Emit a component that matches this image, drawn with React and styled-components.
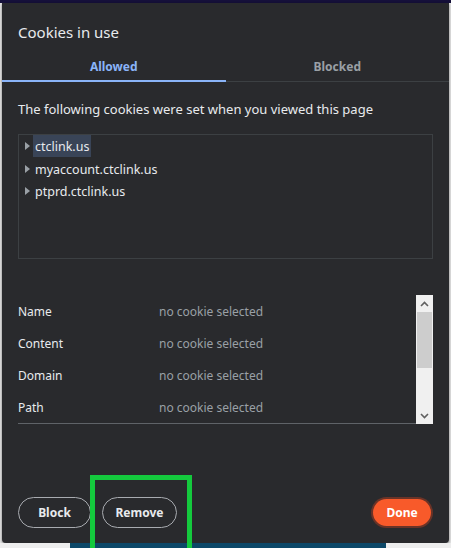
import React from 'react';
import styled, { createGlobalStyle } from 'styled-components';

const GlobalStyle = createGlobalStyle`
  html, body {
    margin: 0;
    padding: 0;
    background: #ececec;
  }
  body {
    font-family: "Noto Sans", "Open Sans", sans-serif;
  }
`;

const Page = styled.div`
  position: relative;
  width: 451px;
  height: 548px;
  overflow: hidden;
  display: flex;
  flex-direction: column;
  background: #e6e6e6;
`;

const TopStrip = styled.div`
  height: 3px;
  background: #15103a;
`;

const Middle = styled.div`
  display: flex;
  padding: 0 2px;
`;

const BottomStrip = styled.div`
  flex: 1;
  display: flex;
  background: #ededed;
  padding-left: 70px;
  span {
    width: 316px;
    background: #0d4868;
  }
`;

const Dialog = styled.div`
  width: 447px;
  height: 540px;
  background: #292a2d;
  border-radius: 0 0 4px 4px;
  box-shadow: 0 1px 3px rgba(0, 0, 0, 0.5);
  display: flex;
  flex-direction: column;
  color: #e8eaed;
`;

const Title = styled.h1`
  margin: 0;
  padding: 19px 16px 8px;
  font-size: 15px;
  line-height: 20px;
  font-weight: 400;
`;

const TabBar = styled.div`
  display: grid;
  grid-template-columns: 1fr 1fr;
  border-bottom: 1px solid #3c4043;
`;

const Tab = styled.div`
  height: 32px;
  margin-bottom: -1px;
  display: flex;
  align-items: center;
  justify-content: center;
  font-size: 12px;
  font-weight: 700;
  color: ${p => (p.$active ? '#8ab4f8' : '#9aa0a6')};
  box-shadow: ${p => (p.$active ? 'inset 0 -2px 0 #8ab4f8' : 'none')};
`;

const Body = styled.div`
  flex: 1;
  display: flex;
  flex-direction: column;
  padding: 18px 16px 15px;
`;

const Description = styled.p`
  margin: 0;
  font-size: 13px;
  line-height: 18px;
`;

const TreeBox = styled.div`
  margin-top: 16px;
  height: 123px;
  border: 1px solid #3c4043;
`;

const TreeRow = styled.div`
  height: 22.5px;
  display: flex;
  align-items: center;
  padding-left: 6px;
  gap: 3px;
  font-size: 12.5px;
`;

const Arrow = styled.span`
  width: 0;
  height: 0;
  border-top: 4px solid transparent;
  border-bottom: 4px solid transparent;
  border-left: 5px solid #9aa0a6;
`;

const TreeLabel = styled.span`
  height: 22px;
  line-height: 23px;
  padding: 0 2px;
  background: ${p => (p.$selected ? '#394457' : 'transparent')};
`;

const Details = styled.div`
  margin-top: 36px;
  display: flex;
`;

const DetailRows = styled.div`
  flex: 1;
  border-bottom: 1px solid #5f6368;
`;

const DetailRow = styled.div`
  height: 32px;
  display: grid;
  grid-template-columns: 141px 1fr;
  align-items: center;
  font-size: 12px;
`;

const Value = styled.span`
  color: #9aa0a6;
`;

const Scrollbar = styled.div`
  width: 17px;
  height: 129px;
  background: #f0f0f0;
  display: flex;
  flex-direction: column;
  align-items: center;
`;

const ScrollArrow = styled.div`
  height: 17px;
  width: 17px;
  display: flex;
  align-items: center;
  justify-content: center;
  margin-top: ${p => (p.$bottom ? 'auto' : '0')};
`;

const Thumb = styled.div`
  width: 15px;
  height: 56px;
  background: #cdcdcd;
`;

const Footer = styled.div`
  margin-top: auto;
  display: flex;
  align-items: center;
  gap: 11px;
`;

const Button = styled.button`
  width: ${p => p.$w}px;
  height: 31px;
  padding: 0;
  border-radius: 16px;
  border: 1px solid #a8abb0;
  background: transparent;
  color: #e8eaed;
  font-family: inherit;
  font-size: 12px;
  font-weight: 700;
`;

const DoneButton = styled.button`
  margin-left: auto;
  width: 58px;
  height: 27px;
  margin-right: 2px;
  padding: 0;
  border-radius: 14px;
  border: none;
  background: #f85a2a;
  color: #ffffff;
  font-family: inherit;
  font-size: 12px;
  font-weight: 700;
  box-shadow: 0 0 0 2px #6a3327;
`;

const Highlight = styled.div`
  position: absolute;
  left: 90px;
  top: 475px;
  width: 92px;
  height: 80px;
  border: 5px solid #14c93d;
`;

const Chevron = ({ up }) => (
  <svg width="9" height="6" viewBox="0 0 9 6">
    <path
      d={up ? 'M1 5 L4.5 1.5 L8 5' : 'M1 1 L4.5 4.5 L8 1'}
      fill="none"
      stroke="#606060"
      strokeWidth="1.6"
    />
  </svg>
);

const domains = ['ctclink.us', 'myaccount.ctclink.us', 'ptprd.ctclink.us'];
const fields = ['Name', 'Content', 'Domain', 'Path'];

export default function App() {
  return (
    <Page>
      <GlobalStyle />
      <TopStrip />
      <Middle>
        <Dialog>
          <Title>Cookies in use</Title>
          <TabBar>
            <Tab $active>Allowed</Tab>
            <Tab>Blocked</Tab>
          </TabBar>
          <Body>
            <Description>The following cookies were set when you viewed this page</Description>
            <TreeBox>
              {domains.map((d, i) => (
                <TreeRow key={d}>
                  <Arrow />
                  <TreeLabel $selected={i === 0}>{d}</TreeLabel>
                </TreeRow>
              ))}
            </TreeBox>
            <Details>
              <DetailRows>
                {fields.map(f => (
                  <DetailRow key={f}>
                    <span>{f}</span>
                    <Value>no cookie selected</Value>
                  </DetailRow>
                ))}
              </DetailRows>
              <Scrollbar>
                <ScrollArrow><Chevron up /></ScrollArrow>
                <Thumb />
                <ScrollArrow $bottom><Chevron /></ScrollArrow>
              </Scrollbar>
            </Details>
            <Footer>
              <Button $w={73}>Block</Button>
              <Button $w={75}>Remove</Button>
              <DoneButton>Done</DoneButton>
            </Footer>
          </Body>
        </Dialog>
      </Middle>
      <BottomStrip><span /></BottomStrip>
      <Highlight />
    </Page>
  );
}
